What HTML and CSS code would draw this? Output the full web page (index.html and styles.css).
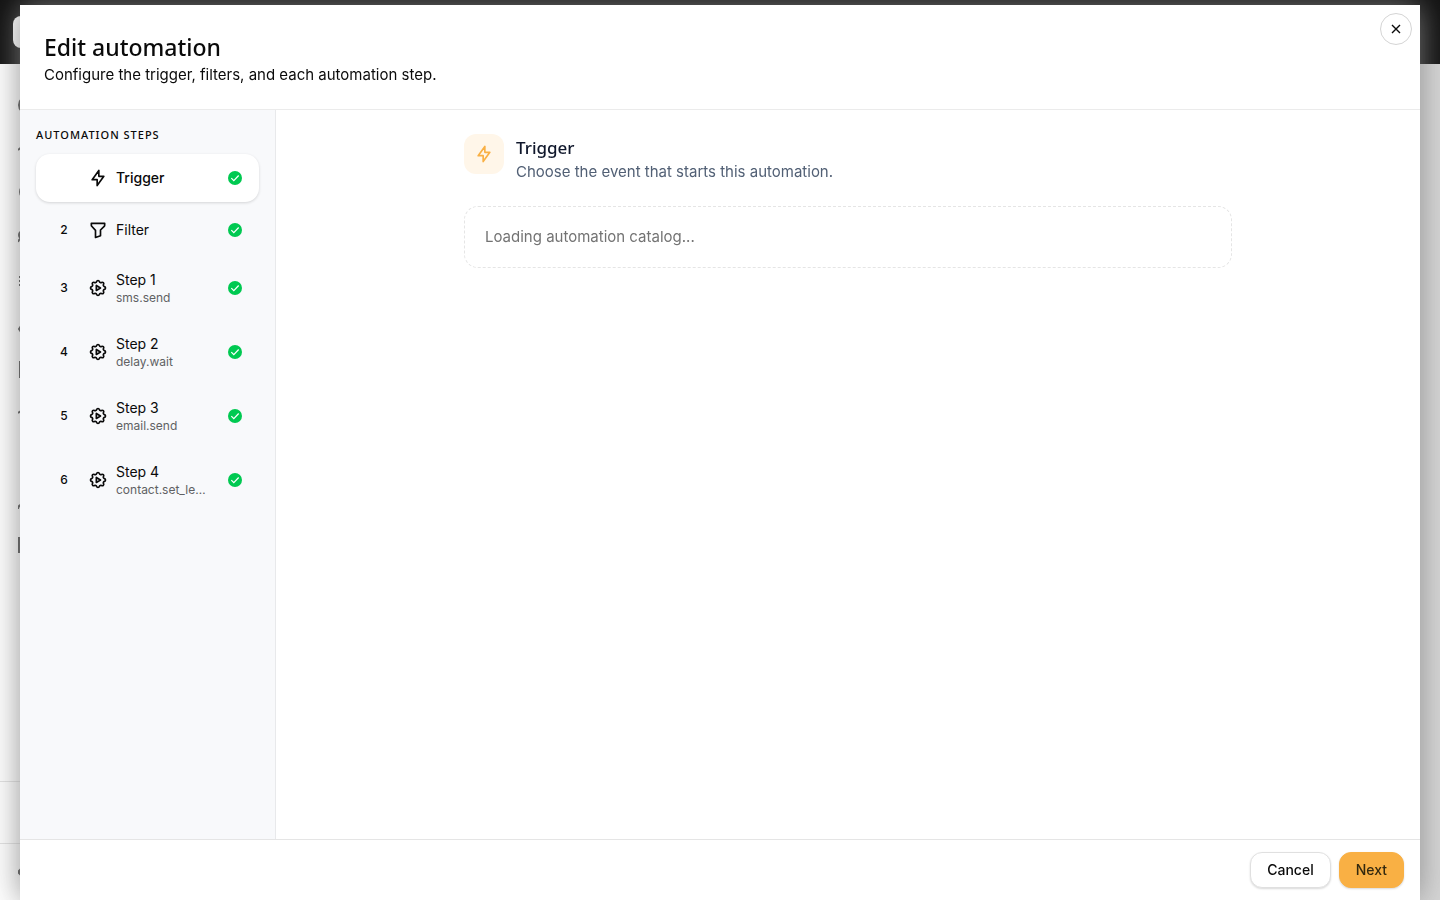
FILE: index.html
```html
<!DOCTYPE html>
<html lang="en">
<head>
    <meta charset="UTF-8">
    <meta name="viewport" content="width=device-width, initial-scale=1.0">
    <title>Edit automation</title>
    <link rel="stylesheet" href="styles.css">
</head>
<body>

    <!-- Shared icons -->
    <svg class="sprite" aria-hidden="true">
        <symbol id="icon-bolt" viewBox="0 0 24 24">
            <path d="M13 3l0 7l6 0l-8 11l0 -7l-6 0l8 -11"/>
        </symbol>
        <symbol id="icon-filter" viewBox="0 0 24 24">
            <path d="M4 4h16v2.172a2 2 0 0 1 -.586 1.414l-4.414 4.414v7l-6 2v-8.5l-4.48 -4.928a2 2 0 0 1 -.52 -1.345v-2.172z"/>
        </symbol>
        <symbol id="icon-automation" viewBox="0 0 24 24">
            <path d="M10.325 4.317c.426 -1.756 2.924 -1.756 3.35 0a1.724 1.724 0 0 0 2.573 1.066c1.543 -.94 3.31 .826 2.37 2.37a1.724 1.724 0 0 0 1.065 2.572c1.756 .426 1.756 2.924 0 3.35a1.724 1.724 0 0 0 -1.066 2.573c.94 1.543 -.826 3.31 -2.37 2.37a1.724 1.724 0 0 0 -2.572 1.065c-.426 1.756 -2.924 1.756 -3.35 0a1.724 1.724 0 0 0 -2.573 -1.066c-1.543 .94 -3.31 -.826 -2.37 -2.37a1.724 1.724 0 0 0 -1.065 -2.572c-1.756 -.426 -1.756 -2.924 0 -3.35a1.724 1.724 0 0 0 1.066 -2.573c-.94 -1.543 .826 -3.31 2.37 -2.37c1 .608 2.296 .07 2.572 -1.065z"/>
            <path d="M10 9v6l5 -3z"/>
        </symbol>
        <symbol id="icon-check" viewBox="0 0 24 24">
            <circle cx="12" cy="12" r="10.5" fill="#00c951"/>
            <path d="M6.5 12.2l3.7 3.7l7.3 -7.6" fill="none" stroke="#fff" stroke-width="1.8"/>
        </symbol>
    </svg>

    <!-- Page behind the dialog -->
    <div class="page" aria-hidden="true">
        <div class="topbar"><div class="logo"></div></div>
        <div class="page-body">
            <div class="side-nav">
                <div class="side-links">
                    <svg class="side-icon" viewBox="0 0 20 20"><circle cx="10" cy="10" r="9"/></svg>
                    <svg class="side-icon" viewBox="0 0 20 20"><path d="M0 11l10-8 9 8"/></svg>
                    <svg class="side-icon" viewBox="0 0 20 20"><circle cx="10" cy="9" r="8"/></svg>
                    <svg class="side-icon" viewBox="0 0 20 20"><path d="M0 15c1-3 3-4 6-4"/><circle cx="5" cy="8" r="4"/></svg>
                    <svg class="side-icon" viewBox="0 0 20 20"><path d="M1 6h1M1 10h1M1 14h1M6 6h12M6 10h12M6 14h12"/></svg>
                    <svg class="side-icon" viewBox="0 0 20 20"><path d="M3 11l-2 3l2 3M1 14h18"/></svg>
                    <svg class="side-icon" viewBox="0 0 20 20"><rect x="2" y="3" width="16" height="15"/></svg>
                    <svg class="side-icon" viewBox="0 0 20 20"><path d="M0 10l10-6 9 6"/></svg>
                </div>
                <div class="side-links side-links-extra">
                    <svg class="side-icon" viewBox="0 0 20 20"><path d="M0 18c0-3 3-5 6-5"/></svg>
                    <svg class="side-icon" viewBox="0 0 20 20"><rect x="1" y="3" width="17" height="14"/></svg>
                </div>
                <div class="side-account"></div>
                <div class="side-bottom">
                    <svg class="side-icon" viewBox="0 0 20 20"><path d="M3 7l-3 3l3 3M1 10h18"/></svg>
                </div>
            </div>
            <div class="page-shade"></div>
        </div>
    </div>

    <div class="overlay">
        <div class="dialog" role="dialog" aria-labelledby="dialog-title">
            <header class="dialog-header">
                <h1 id="dialog-title">Edit automation</h1>
                <p>Configure the trigger, filters, and each automation step.</p>
                <button class="close-btn" type="button" aria-label="Close">
                    <svg viewBox="0 0 16 16"><path d="M4 4l8 8M12 4l-8 8"/></svg>
                </button>
            </header>

            <div class="dialog-body">
                <nav class="steps" aria-label="Automation steps">
                    <h2>AUTOMATION STEPS</h2>
                    <button class="step active" type="button">
                        <span class="step-number"></span>
                        <svg class="icon"><use href="#icon-bolt"/></svg>
                        <span class="step-text"><span class="step-title">Trigger</span></span>
                        <svg class="check"><use href="#icon-check"/></svg>
                    </button>
                    <button class="step" type="button">
                        <span class="step-number">2</span>
                        <svg class="icon"><use href="#icon-filter"/></svg>
                        <span class="step-text"><span class="step-title">Filter</span></span>
                        <svg class="check"><use href="#icon-check"/></svg>
                    </button>
                    <button class="step" type="button">
                        <span class="step-number">3</span>
                        <svg class="icon"><use href="#icon-automation"/></svg>
                        <span class="step-text"><span class="step-title">Step 1</span><span class="step-type">sms.send</span></span>
                        <svg class="check"><use href="#icon-check"/></svg>
                    </button>
                    <button class="step" type="button">
                        <span class="step-number">4</span>
                        <svg class="icon"><use href="#icon-automation"/></svg>
                        <span class="step-text"><span class="step-title">Step 2</span><span class="step-type">delay.wait</span></span>
                        <svg class="check"><use href="#icon-check"/></svg>
                    </button>
                    <button class="step" type="button">
                        <span class="step-number">5</span>
                        <svg class="icon"><use href="#icon-automation"/></svg>
                        <span class="step-text"><span class="step-title">Step 3</span><span class="step-type">email.send</span></span>
                        <svg class="check"><use href="#icon-check"/></svg>
                    </button>
                    <button class="step" type="button">
                        <span class="step-number">6</span>
                        <svg class="icon"><use href="#icon-automation"/></svg>
                        <span class="step-text"><span class="step-title">Step 4</span><span class="step-type">contact.set_le…</span></span>
                        <svg class="check"><use href="#icon-check"/></svg>
                    </button>
                </nav>

                <main class="content">
                    <div class="panel">
                        <div class="panel-head">
                            <div class="panel-icon"><svg class="icon"><use href="#icon-bolt"/></svg></div>
                            <div>
                                <h2>Trigger</h2>
                                <p>Choose the event that starts this automation.</p>
                            </div>
                        </div>
                        <div class="loading">Loading automation catalog...</div>
                    </div>
                </main>
            </div>

            <footer class="dialog-footer">
                <button class="btn" type="button">Cancel</button>
                <button class="btn btn-primary" type="button">Next</button>
            </footer>
        </div>
    </div>

</body>
</html>
```
FILE: styles.css
```css
* {
    box-sizing: border-box;
}
body {
    margin: 0;
    font-family: Inter, sans-serif;
    font-size: 15px;
    line-height: 20px;
    color: #0a0a0a;
}
h1, h2, p {
    margin: 0;
}
button {
    font: inherit;
    font-size: 14px;
    color: inherit;
    cursor: pointer;
}
.sprite {
    display: none;
}

/* Page behind the dialog */
.page {
    display: flex;
    flex-direction: column;
    height: 100vh;
    overflow: hidden;
}
.topbar {
    height: 64px;
    padding: 16px 13px;
    background: #111;
}
.logo {
    width: 32px;
    height: 32px;
    border-radius: 8px;
    background: #fff;
}
.page-body {
    flex: 1;
    display: flex;
}
.side-nav {
    width: 256px;
    display: flex;
    flex-direction: column;
    padding-top: 19px;
    background: #fff;
}
.side-links {
    display: flex;
    flex-direction: column;
    gap: 24px;
    padding: 12px 18px;
}
.side-links-extra {
    padding-top: 56px;
}
.side-icon {
    display: block;
    width: 20px;
    height: 20px;
    fill: none;
    stroke: #444;
    stroke-width: 2;
}
.side-account {
    height: 62px;
    margin-top: auto;
    border-top: 1px solid #e2e2e2;
}
.side-bottom {
    height: 57px;
    padding: 18px;
    border-top: 1px solid #e2e2e2;
}
.page-shade {
    flex: 1;
    background: #d6d6d6;
}

/* Dialog */
.overlay {
    position: fixed;
    inset: 0;
    padding: 5px 20px 0;
}
.dialog {
    display: flex;
    flex-direction: column;
    height: 100%;
    background: #fff;
    box-shadow: 0 0 30px rgba(135, 135, 135, 0.9);
}
.dialog-header {
    position: relative;
    padding: 24px;
    border-bottom: 1px solid #ebebeb;
}
.dialog-header h1 {
    font-family: "Noto Sans", sans-serif;
    font-size: 23px;
    font-weight: 500;
    line-height: 36px;
}
.close-btn {
    position: absolute;
    top: 8px;
    right: 8px;
    display: flex;
    align-items: center;
    justify-content: center;
    width: 32px;
    height: 32px;
    padding: 0;
    border: 1px solid #d4d4d4;
    border-radius: 50%;
    background: #fff;
}
.close-btn svg {
    width: 16px;
    height: 16px;
    stroke: #0a0a0a;
    stroke-width: 1.4;
}
.dialog-body {
    flex: 1;
    display: flex;
    min-height: 0;
}

/* Steps list */
.steps {
    display: flex;
    flex-direction: column;
    gap: 4px;
    width: 256px;
    padding: 16px;
    border-right: 1px solid #e8e9eb;
    background: #f8f9fb;
}
.steps h2 {
    margin-bottom: 6px;
    font-family: "Noto Sans", sans-serif;
    font-size: 11px;
    font-weight: 500;
    line-height: 18px;
    letter-spacing: 1px;
}
.step {
    display: flex;
    align-items: center;
    min-height: 48px;
    padding: 12px 16px;
    border: none;
    border-radius: 14px;
    background: none;
    text-align: left;
}
.step.active {
    background: #fff;
    box-shadow: 0 1px 3px rgba(0, 0, 0, 0.15);
    font-weight: 500;
}
.step-number {
    width: 24px;
    margin-right: 12px;
    font-size: 12px;
    font-weight: 500;
    text-align: center;
}
.icon {
    flex: none;
    width: 20px;
    height: 20px;
    fill: none;
    stroke: currentColor;
    stroke-width: 2;
    stroke-linecap: round;
    stroke-linejoin: round;
}
.step-text {
    flex: 1;
    min-width: 0;
    margin: 0 16px 0 8px;
}
.step-title,
.step-type {
    display: block;
    white-space: nowrap;
}
.step-type {
    font-size: 12px;
    line-height: 16px;
    color: #606163;
}
.check {
    flex: none;
    width: 16px;
    height: 16px;
}

/* Selected step */
.content {
    flex: 1;
    padding: 24px;
    overflow: auto;
}
.panel {
    max-width: 768px;
    margin: 0 auto;
}
.panel-head {
    display: flex;
    gap: 12px;
    margin-bottom: 24px;
}
.panel-icon {
    display: flex;
    align-items: center;
    justify-content: center;
    width: 40px;
    height: 40px;
    border-radius: 12px;
    background: #fff6e9;
    color: #f9b044;
}
.panel-head h2 {
    font-family: "Noto Sans", sans-serif;
    font-size: 17px;
    font-weight: 500;
    line-height: 28px;
    color: #0f172b;
}
.panel-head p {
    color: #526075;
}
.loading {
    padding: 20px;
    border: 1px dashed #e5e5e5;
    border-radius: 14px;
    color: #737373;
}

.dialog-footer {
    display: flex;
    justify-content: flex-end;
    gap: 8px;
    padding: 12px 16px;
    border-top: 1px solid #e5e5e5;
}
.btn {
    height: 36px;
    padding: 0 16px;
    border: 1px solid #e0e0e0;
    border-radius: 12px;
    background: #fff;
    box-shadow: 0 1px 2px rgba(0, 0, 0, 0.15);
    font-weight: 500;
}
.btn-primary {
    border-color: #f9b044;
    background: #f9b044;
    color: #33290f;
}
```
